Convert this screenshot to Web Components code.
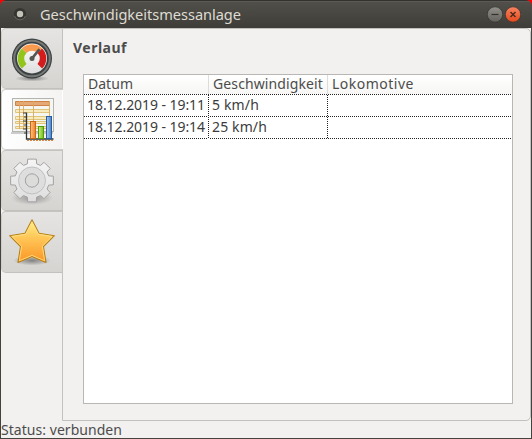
<!DOCTYPE html>
<html lang="de"><head><meta charset="utf-8"><title>Geschwindigkeitsmessanlage</title>
<style>html,body{margin:0;height:100%;overflow:hidden;background:#f00}</style></head>
<body><app-window></app-window>
<script>
class Base extends HTMLElement{
  render(html){this.attachShadow({mode:'open'}).innerHTML=html}
}
/* Label whose letter spacing is adjusted to a given width */
customElements.define('fit-label',class extends Base{
  connectedCallback(){
    this.render('<style>:host{display:block;white-space:pre}span{display:inline-block}</style><span></span>');
    const s=this.shadowRoot.querySelector('span'),t=this.getAttribute('text');
    s.textContent=t;
    const w=+this.getAttribute('w');
    s.style.letterSpacing=((w-s.getBoundingClientRect().width)/t.length)+'px';
  }
});
customElements.define('title-bar',class extends Base{
  connectedCallback(){this.render(`<style>
:host{display:flex;align-items:center;height:28px;box-sizing:border-box;padding:0 11px 0 12px;background:linear-gradient(#33322e 0,#33322e 1px,#66655f 1px,#504f49 2px,#3e3d38 28px);border-radius:6px 6px 0 0;color:#dfdbd2;font-size:14.6px}
fit-label{flex:1;margin-left:12px;line-height:26px;padding-bottom:1px}
svg{display:block}.b{margin-right:2px}
</style>
<svg width="16" height="16" viewBox="0 0 16 16"><circle cx="8" cy="8" r="6" fill="#35342f"/><path d="M2.4 10a6 6 0 0 0 11.2 0" fill="none" stroke="#69675f"/><circle cx="8" cy="8" r="3.2" fill="#c5c2ba"/></svg>
<fit-label text="Geschwindigkeitsmessanlage" w="201"></fit-label>
<svg class="b" width="16" height="18" viewBox="0 0 16 18"><defs><linearGradient id="min" x2="0" y2="1"><stop stop-color="#92918b"/><stop offset="1" stop-color="#62615b"/></linearGradient></defs><circle cx="8" cy="9.5" r="7.7" fill="url(#min)" stroke="#35342f" stroke-width=".7"/><path d="M4.500 9.500h7" stroke="#33322e" stroke-width="1.200"/></svg>
<svg width="16" height="18" viewBox="0 0 16 18"><defs><linearGradient id="close" x2="0" y2="1"><stop stop-color="#f98360"/><stop offset="1" stop-color="#e24a1b"/></linearGradient></defs><circle cx="8" cy="9.5" r="7.7" fill="url(#close)" stroke="#35342f" stroke-width=".7"/><path d="M5.500 7l5 5m0-5l-5 5" stroke="#46291d" stroke-width="1.400"/></svg>`)}
});
const icons={
gauge:`<defs><radialGradient id="s"><stop stop-color="#000" stop-opacity=".4"/><stop offset="1" stop-color="#000" stop-opacity="0"/></radialGradient><linearGradient id="f" x2="0" y2="1"><stop stop-color="#fff"/><stop offset="1" stop-color="#ddd"/></linearGradient></defs>
<ellipse cx="24" cy="43.500" rx="17" ry="3" fill="url(#s)"/><circle cx="24" cy="23.500" r="20" fill="#3b4143"/><circle cx="24" cy="23.500" r="17.800" fill="none" stroke="#777975" stroke-width="2"/><circle cx="24" cy="23.500" r="15" fill="url(#f)"/>
<g fill="none" stroke-width="6.500"><path d="M16.200 31.300A11 11 0 0 1 16.200 15.700" stroke="#93c51c"/><path d="M16.200 15.700A11 11 0 0 1 31.800 15.700" stroke="#f99b4e"/><path d="M31.800 15.700A11 11 0 0 1 31.800 31.300" stroke="#d51c1c"/></g>
<path d="M24 23.500l6.800-8.500" stroke="#555753" stroke-width="2.800" stroke-linecap="round"/><circle cx="24" cy="23.500" r="2.500" fill="#555753"/>`,
chart:`<defs><linearGradient id="o"><stop stop-color="#ffc78a"/><stop offset="1" stop-color="#ed7d20"/></linearGradient><linearGradient id="g"><stop stop-color="#c8ef82"/><stop offset="1" stop-color="#73bd20"/></linearGradient><linearGradient id="b"><stop stop-color="#a7c9ef"/><stop offset="1" stop-color="#4680c8"/></linearGradient></defs>
<path d="M3 37h42" stroke="#ccc" stroke-width="2"/><rect x="4.500" y="2.500" width="41" height="33" fill="#f5f5f1" stroke="#b3b5b1"/><g fill="#f7ebc0" stroke="#dcbf70" stroke-width=".9"><path d="M7.500 13.500h34v3h-34zM7.500 20.500h34v3h-34zM7.500 25.500h34v2h-34zM7.500 30.500h34v2h-34z"/></g><path d="M7.500 5.500h34v4h-34z" fill="#e5a877" stroke="#cf8148"/><path d="M11.500 5v28M15.500 5v28M25.500 5v28M41.500 5v28" stroke="#dba95c" stroke-width=".9"/>
<path d="M18.500 16.500v26.500h27" fill="none" stroke="#2e3436" stroke-width="1.300"/><path d="M15 17h3M16 21h2M15 25h3M16 29h2M15 33h3M16 37h2" stroke="#444"/>
<rect x="22.500" y="25.500" width="5" height="17" fill="url(#o)" stroke="#c86718"/><rect x="30.500" y="30.500" width="5" height="12" fill="url(#g)" stroke="#4e9a0b"/><rect x="38.500" y="20.500" width="5" height="22" fill="url(#b)" stroke="#2a5aa0"/><path d="M19 44.500h27" stroke="#d98649" stroke-dasharray="2 1"/>`,
gear:`<defs><linearGradient id="g" x2="0" y2="1"><stop stop-color="#f5f5f5"/><stop offset="1" stop-color="#dedede"/></linearGradient><radialGradient id="s"><stop stop-color="#000" stop-opacity=".3"/><stop offset="1" stop-color="#000" stop-opacity="0"/></radialGradient></defs><ellipse cx="24" cy="41" rx="21" ry="7" fill="url(#s)"/><path id="p" fill="url(#g)" stroke="#a3a3a3" stroke-linejoin="round"/><circle cx="24" cy="23.500" r="13.500" fill="#dedede" stroke="#bbb" stroke-width=".9"/><circle cx="24" cy="23.500" r="6.700" fill="#dcdcda" stroke="#a0a0a0"/>`,
star:`<defs><linearGradient id="g" x2="0" y2="1"><stop stop-color="#fff08b"/><stop offset=".4" stop-color="#ffc95a"/><stop offset="1" stop-color="#fb9424"/></linearGradient><radialGradient id="s"><stop stop-color="#000" stop-opacity=".4"/><stop offset="1" stop-color="#000" stop-opacity="0"/></radialGradient></defs><ellipse cx="24" cy="42.500" rx="19" ry="5" fill="url(#s)"/><path d="M24 1.700L31 15.300L46.400 17.700L35.500 28.500L38 44.500L24 38.600L10 44.500L12.500 28.500L1.600 17.700L17 15.300z" fill="url(#g)" stroke="#b78118" stroke-width="1.100" stroke-linejoin="round"/><path d="M24 4.300L30.400 16.300L44.100 18.500L34.400 28.200L36.600 42.700L24 37.400L11.400 42.700L13.600 28.200L3.900 18.500L17.600 16.300z" fill="none" stroke="#ffe48b" stroke-width=".8"/>`};
customElements.define('side-tab',class extends Base{
  connectedCallback(){
    this.render(`<style>:host{display:flex;box-sizing:border-box;height:61px;align-items:center;padding-left:6px;border:1px solid #c3c1be;border-left-color:#cfcdca;border-top-color:#c6c4c1;border-radius:5px 0 0 5px;background:linear-gradient(#e5e4e2,#d5d4d1)}
:host([active]){background:linear-gradient(90deg,#fff,#f4f3f2);border-color:#d0cecb;border-right-color:transparent}:host(:last-child){height:62px}svg{display:block}</style><svg width="48" height="48" viewBox="0 0 48 48">${icons[this.getAttribute('icon')]}</svg>`);
    const p=this.shadowRoot.querySelector('#p');
    if(p){let d='';for(let i=0;i<8;i++){[[-.27,17.3],[-.2,21.8],[.2,21.8],[.27,17.3]].forEach(([a,r])=>{const t=i*Math.PI/4+a;d+=(d?'L':'M')+(24+r*Math.sin(t)).toFixed(2)+' '+(23.5-r*Math.cos(t)).toFixed(2)})}p.setAttribute('d',d+'z')}
  }
});
customElements.define('data-table',class extends Base{
  connectedCallback(){
    const row=(c,cls)=>`<div class="r ${cls}">`+c.map(([t,w])=>`<div class="c">${t?`<fit-label text="${t}" w="${w}"></fit-label>`:''}</div>`).join('')+'</div>';
    this.render(`<style>:host{display:block;box-sizing:border-box;border:1px solid #b9b7b4;background:#fff;color:#3c3c3c}
.r{display:grid;grid-template-columns:125px 119px 1fr;height:22px;line-height:20px;
--h:repeating-linear-gradient(90deg,#222 0 1px,#fff 1px 2px);--v:repeating-linear-gradient(#222 0 1px,#fff 1px 2px);background:var(--h) bottom/100% 1px no-repeat}
.c{padding-left:3px;background:var(--v) right/1px 100% no-repeat}.c:last-child{background:none}
.h{height:20px;line-height:18px;color:#4c4c4c;background:var(--h) bottom/100% 1px no-repeat,linear-gradient(#fff,#f6f5f4)}.h .c{padding-left:4px;background:linear-gradient(#dedcda,#dedcda) right top/1px 19px no-repeat}.h .c:last-child{background:none}</style>
${row([['Datum',45],['Geschwindigkeit',110],['Lokomotive',82]],'h')}
${row([['18.12.2019 - 19:11',118],['5 km/h',47],['']],'')}
${row([['18.12.2019 - 19:14',118],['25 km/h',55],['']],'')}`)}
});
customElements.define('app-window',class extends Base{
  connectedCallback(){this.render(`<style>
:host{display:flex;flex-direction:column;width:532px;height:439px;font:14px "Noto Sans","Open Sans",sans-serif;color:#4c4c4c}
.body{flex:1;min-height:0;display:flex;flex-direction:column;box-sizing:border-box;border:1px solid #44433e;border-top:0;background:#f2f1f0}
.main{height:393px;display:flex}
nav{width:62px;position:relative;z-index:1}
section{flex:1;box-sizing:border-box;border:1px solid #c3c1be;border-radius:0 5px 5px 0;margin:0 0 0 -1px;padding:9px 17px 16px 20px;display:flex;flex-direction:column}
h1{margin:0 0 0 -10px;font-size:14px;line-height:20px;height:36px}
data-table{height:330px}
footer{line-height:18px;height:17px}
</style><title-bar></title-bar><div class="body"><div class="main"><nav><side-tab icon="gauge"></side-tab><side-tab icon="chart" active></side-tab><side-tab icon="gear"></side-tab><side-tab icon="star"></side-tab></nav><section><h1><fit-label text="Verlauf" w="54"></fit-label></h1><data-table></data-table></section></div><footer><fit-label text="Status: verbunden" w="121"></fit-label></footer></div>`)}
});
</script></body></html>
